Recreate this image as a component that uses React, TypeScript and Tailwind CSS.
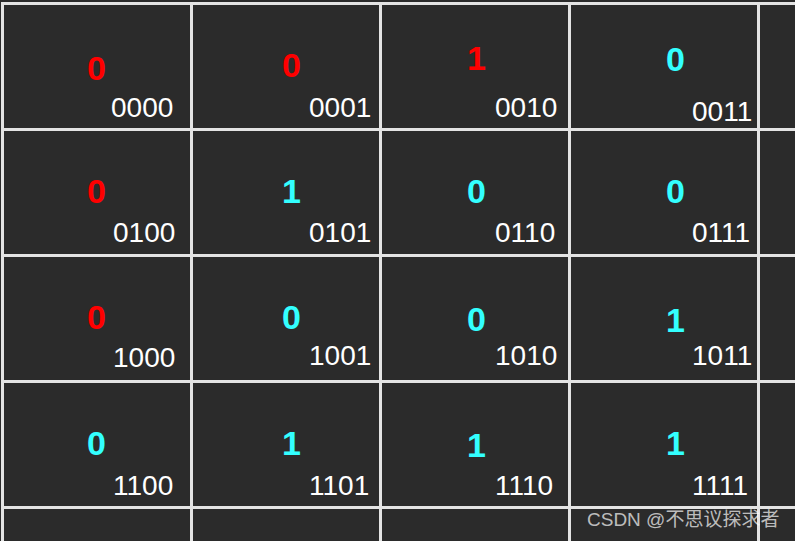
import { Fragment } from "react";

const RED = "text-[#ff0000]";
const CYAN = "text-[#33ffff]";

// per-column horizontal offsets
const bigLeft = ["pl-[83px]", "pl-[89px]", "pl-[85px]", "pl-[95px]"];
const smallLeft = ["pl-[109px]", "pl-[116px]", "pl-[113px]", "pl-[121px]"];

type Cell = { v: string; code: string; color: string; top: string; gap: string; left?: string };

const rows: Cell[][] = [
  [
    { v: "0", code: "0000", color: RED, top: "pt-[46px]", gap: "mt-[9px]", left: "pl-[107px]" },
    { v: "0", code: "0001", color: RED, top: "pt-[43px]", gap: "mt-[12px]" },
    { v: "1", code: "0010", color: RED, top: "pt-[36px]", gap: "mt-[19px]" },
    { v: "0", code: "0011", color: CYAN, top: "pt-[37px]", gap: "mt-[22px]" },
  ],
  [
    { v: "0", code: "0100", color: RED, top: "pt-[43px]", gap: "mt-[11px]" },
    { v: "1", code: "0101", color: CYAN, top: "pt-[43px]", gap: "mt-[11px]" },
    { v: "0", code: "0110", color: CYAN, top: "pt-[43px]", gap: "mt-[11px]" },
    { v: "0", code: "0111", color: CYAN, top: "pt-[43px]", gap: "mt-[11px]" },
  ],
  [
    { v: "0", code: "1000", color: RED, top: "pt-[43px]", gap: "mt-[10px]" },
    { v: "0", code: "1001", color: CYAN, top: "pt-[43px]", gap: "mt-[8px]" },
    { v: "0", code: "1010", color: CYAN, top: "pt-[45px]", gap: "mt-[6px]" },
    { v: "1", code: "1011", color: CYAN, top: "pt-[46px]", gap: "mt-[5px]" },
  ],
  [
    { v: "0", code: "1100", color: CYAN, top: "pt-[43px]", gap: "mt-[12px]" },
    { v: "1", code: "1101", color: CYAN, top: "pt-[43px]", gap: "mt-[12px]" },
    { v: "1", code: "1110", color: CYAN, top: "pt-[45px]", gap: "mt-[10px]" },
    { v: "1", code: "1111", color: CYAN, top: "pt-[43px]", gap: "mt-[12px]" },
  ],
];

const MapCell = ({ cell, col }: { cell: Cell; col: number }) => (
  <div className={`bg-[#2b2b2b] flex flex-col ${cell.top}`}>
    <div className={`${bigLeft[col]} ${cell.color} text-[34px] leading-[34px] font-bold`}>{cell.v}</div>
    <div className={`${cell.left ?? smallLeft[col]} ${cell.gap} text-white text-[28px] leading-[28px]`}>
      {cell.code}
    </div>
  </div>
);

export default function App() {
  return (
    <div
      className="relative w-[795px] h-[541px] overflow-hidden bg-[#2b2b2b]"
      style={{ fontFamily: '"Liberation Sans", Arial, sans-serif' }}
    >
      <div className="ml-[1px] mt-[2px] w-[1000px] bg-[#e4e4e4] p-[3px] grid grid-cols-[186px_186px_186px_186px_186px] auto-rows-[123px] gap-[3px]">
        {rows.map((row, r) => (
          <Fragment key={r}>
            {row.map((cell, c) => (
              <MapCell key={c} cell={cell} col={c} />
            ))}
            <div className="bg-[#2b2b2b]" />
          </Fragment>
        ))}
        {[0, 1, 2, 3, 4].map((i) => (
          <div key={`last-${i}`} className="bg-[#2b2b2b]" />
        ))}
      </div>

      {/* watermark */}
      <div
        className="absolute left-[587px] top-[508px] text-[19px] leading-[24px] text-white/70 whitespace-nowrap"
        style={{ fontFamily: '"Liberation Sans", "Noto Sans CJK SC", sans-serif' }}
      >
        CSDN @不思议探求者
      </div>
    </div>
  );
}
